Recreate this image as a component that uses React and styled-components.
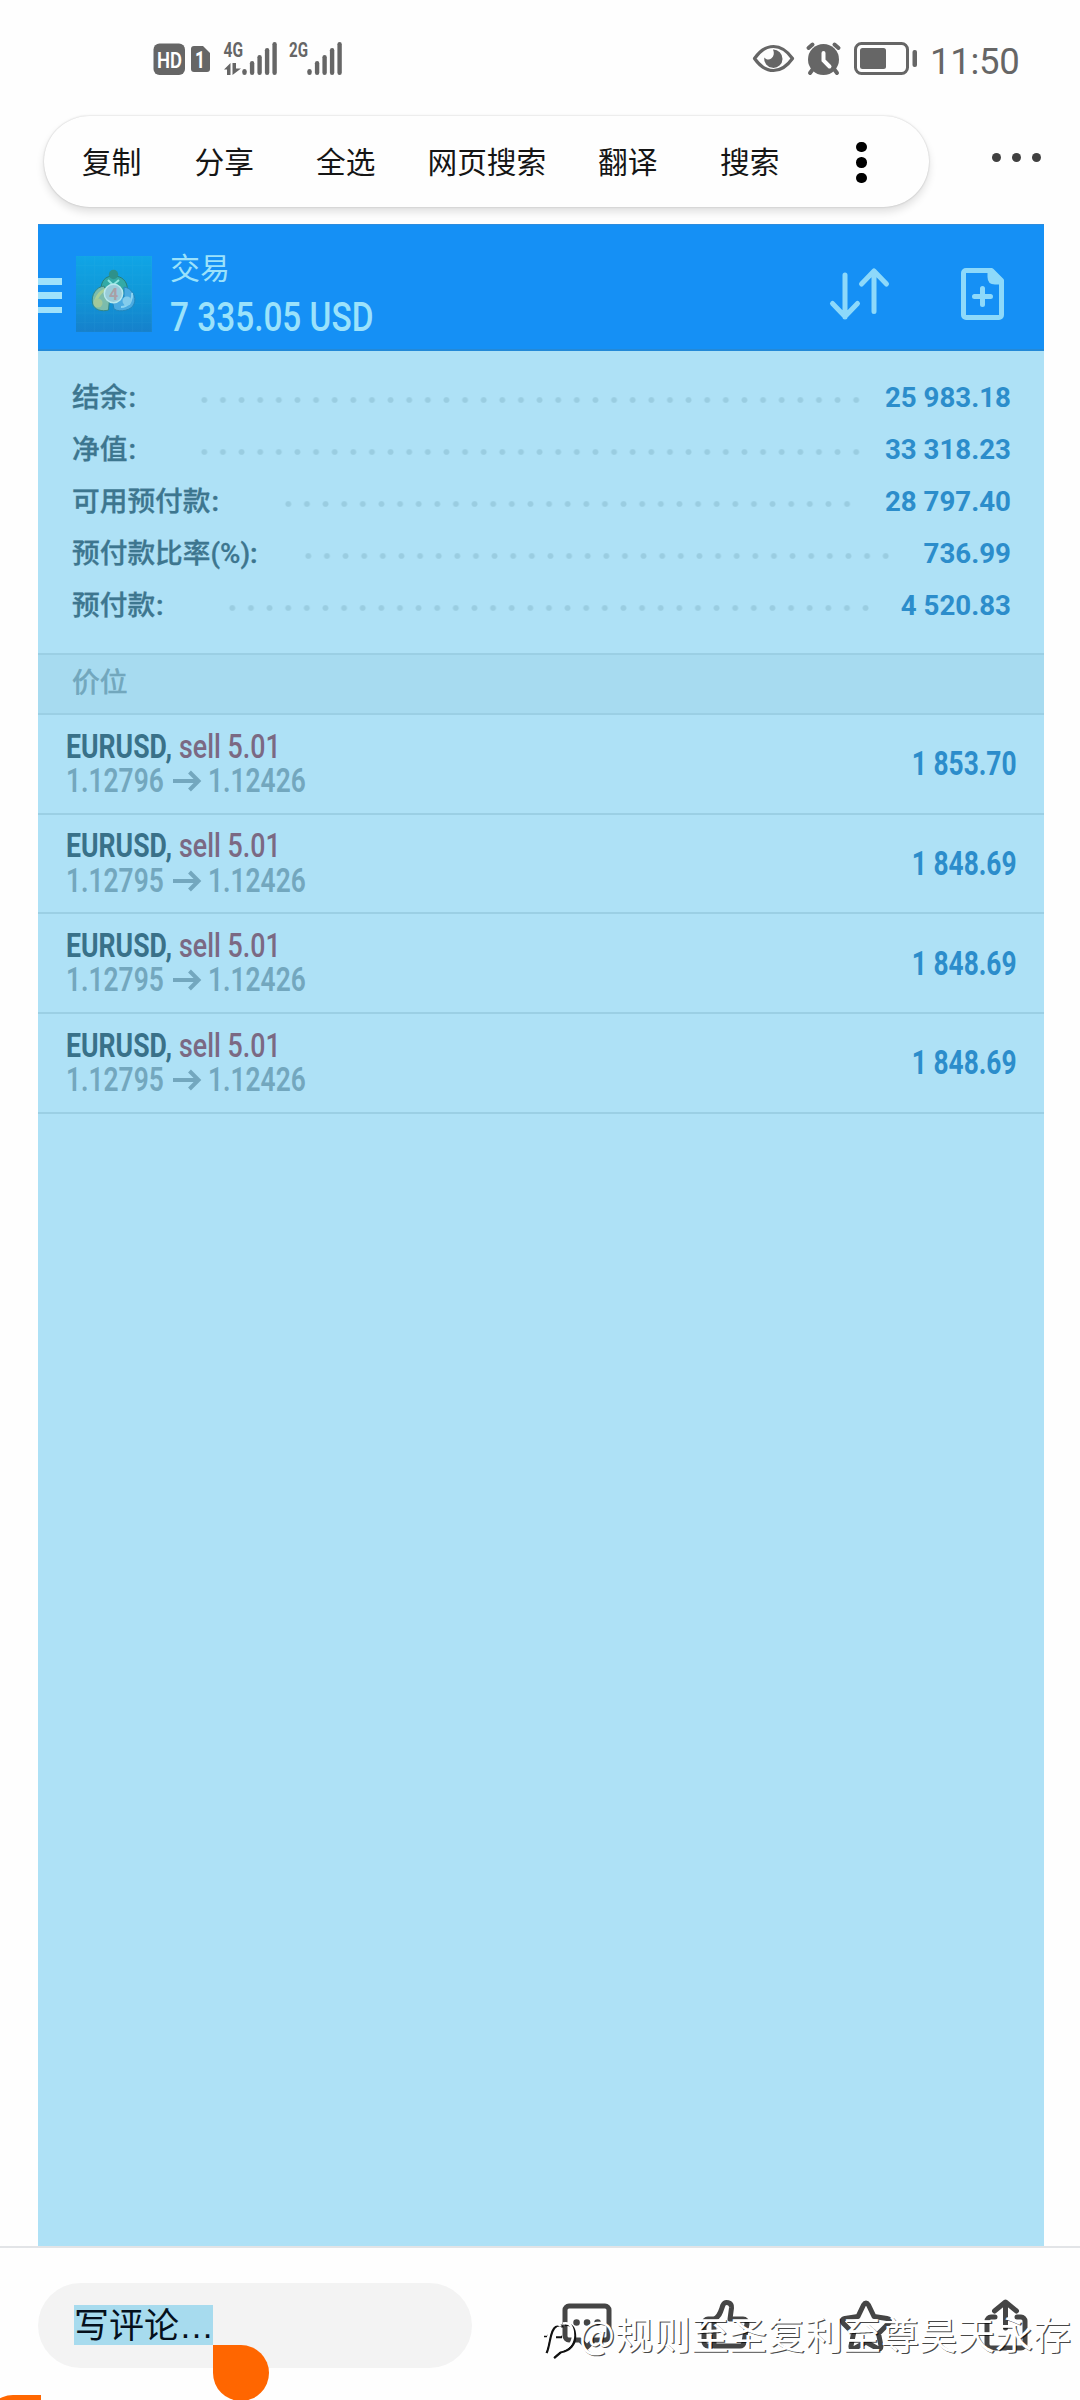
import React from "react";
import styled, { createGlobalStyle } from "styled-components";

const cjk = `Roboto, "Noto Sans CJK SC", sans-serif`;

const Global = createGlobalStyle`
  * { box-sizing: border-box; }
  body { margin: 0; background: #fefefe; }
`;

const Screen = styled.div`
  position: relative;
  width: 1080px;
  height: 2400px;
  overflow: hidden;
  display: flex;
  flex-direction: column;
  background: #fefefe;
  font-family: ${cjk};
`;

const StatusBar = styled.header`
  height: 116px;
  display: flex;
  justify-content: space-between;
  padding: 36px 60px 0 150px;
  color: #666;
`;

const StatusGroup = styled.div`
  display: flex;
  height: 44px;
`;

const Clock = styled.span`
  font-size: 36.5px;
  font-weight: 400;
  line-height: 51px;
  width: 90px;
  margin-left: 9px;
  letter-spacing: -0.3px;
  white-space: nowrap;
`;

const MenuRow = styled.div`
  height: 108px;
  display: flex;
  align-items: flex-start;
  padding-left: 44px;
`;

const SelectionMenu = styled.nav`
  width: 885px;
  height: 91px;
  display: flex;
  align-items: center;
  padding: 2px 0 0 38px;
  border-radius: 46px;
  background: #fefefe;
  box-shadow: 0 0 2px rgba(0, 0, 0, 0.22), 0 5px 8px rgba(0, 0, 0, 0.12);
`;

const MenuItem = styled.span`
  width: ${(p) => p.$w}px;
  flex: none;
  font-size: 29.7px;
  line-height: 44px;
  color: #151515;
  white-space: nowrap;
`;

const DotGroup = styled.span`
  display: flex;
  flex-direction: ${(p) => (p.$vertical ? "column" : "row")};
  gap: ${(p) => p.$gap}px;
  margin: ${(p) => p.$margin};
`;

const Dot = styled.i`
  width: ${(p) => p.$size}px;
  height: ${(p) => p.$size}px;
  border-radius: 50%;
  background: ${(p) => p.$color};
`;

const Article = styled.main`
  flex: 1;
  margin: 0 36px 0 38px;
  background: #aee1f6;
`;

const AppHeader = styled.div`
  height: 127px;
  display: flex;
  align-items: flex-start;
  background: #1590f5;
  border-top: 1px solid #2d8cdd;
  border-bottom: 2px solid #2389d8;
  color: #9be2fb;
`;

const Hamburger = styled.div`
  width: 24px;
  margin: 53px 14px 0 0;
  display: flex;
  flex-direction: column;
  gap: 7.8px;
  i { height: 6.5px; background: #9fe2fb; }
`;

const AppLogo = styled.div`
  width: 76px;
  height: 76px;
  margin: 31px 18px 0 0;
  background: linear-gradient(#10a5e6, #1098d8 50%, #1680cb);
`;

const Heading = styled.div`
  flex: 1;
  margin-top: 23px;
`;

const HeadingTitle = styled.div`
  font-size: 30px;
  line-height: 42px;
`;

const Squeeze = styled.span`
  display: inline-block;
  transform: scaleX(${(p) => p.$x});
  transform-origin: ${(p) => p.$origin || "left"} center;
  white-space: nowrap;
`;

const HeadingAmount = styled.div`
  font-size: 40px;
  font-weight: 480;
  line-height: 48px;
  margin-top: 4px;
`;

const HeaderIcon = styled.svg`
  display: block;
  flex: none;
  width: ${(p) => p.$w}px;
  height: 60px;
  margin: 40px ${(p) => p.$right}px 0 0;
  fill: none;
  stroke: #8dd9fa;
  stroke-width: 5;
  stroke-linecap: round;
  stroke-linejoin: round;
`;

const Summary = styled.section`
  height: 302px;
  padding: 20.5px 33px 0 34px;
`;

const SummaryRow = styled.div`
  height: 52.2px;
  display: flex;
  align-items: center;
`;

const SummaryLabel = styled.span`
  width: ${(p) => p.$w}px;
  flex: none;
  font-size: 27.7px;
  font-weight: 500;
  line-height: 40px;
  color: #3d768f;
  -webkit-text-stroke: 0.3px #3d768f;
  white-space: nowrap;
`;

const Colon = styled.span`
  margin-left: ${(p) => (p.$tight ? 0 : 1)}px;
  font-weight: 600;
`;

const Leader = styled.span`
  width: ${(p) => p.$count * 18.63}px;
  height: 8px;
  margin-top: 4px;
  background: radial-gradient(circle at center, #9acde1 0, #9acde1 2.3px, transparent 3.5px) 0 0 / 18.63px 8px repeat-x;
`;

const SummaryValue = styled.span`
  flex: 1;
  margin-top: -1px;
  text-align: right;
  font-size: 27.7px;
  font-weight: 680;
  color: #2c8dcb;
`;

const SectionTitle = styled.div`
  height: 62px;
  padding-left: 34px;
  border-top: 2px solid #9bcfe4;
  border-bottom: 2px solid #9bcfe4;
  background: #a7dbf0;
  font-size: 27.7px;
  line-height: 55px;
  color: #72a7bd;
  -webkit-text-stroke: 0.7px #72a7bd;
`;

const Position = styled.div`
  height: 99.7px;
  display: flex;
  align-items: center;
  justify-content: space-between;
  padding: 0 27px 0 28px;
  border-bottom: 2px solid #9bcfe4;
  font-size: 32.3px;
`;

const PositionInfo = styled.div`
  margin-top: 0;
`;

const PositionLine = styled.div`
  height: 34.5px;
  display: flex;
  align-items: center;
  line-height: 34px;
  color: #73a7be;
  font-weight: ${(p) => p.$weight || 400};
`;

const Cell = styled.span`
  width: ${(p) => p.$w}px;
  flex: none;
  color: ${(p) => p.$color};
  font-weight: ${(p) => p.$weight};
`;

const Profit = styled.span`
  margin-top: 1px;
  color: #2c8dcb;
  font-weight: 700;
`;

const ArrowIcon = styled.svg`
  display: block;
  width: 37px;
  height: 24px;
  fill: none;
  stroke: currentColor;
  stroke-width: 4;
`;

const BottomBar = styled.footer`
  height: 154.5px;
  display: flex;
  align-items: flex-start;
  padding: 35px 0 0 38px;
  border-top: 2px solid #e2e4e7;
  background: #fefefe;
`;

const CommentBox = styled.div`
  width: 434px;
  height: 85px;
  flex: none;
  padding: 22px 0 0 36px;
  border-radius: 43px;
  background: #f3f3f3;
`;

const SelectedText = styled.span`
  display: block;
  width: 139px;
  height: 40px;
  background: #a7dbee;
  color: #05101c;
  font: 35px/36px "Noto Sans CJK SC", sans-serif;
  white-space: nowrap;
`;

const Ellipsis = styled.span`
  font-family: "Liberation Sans", sans-serif;
`;

const Actions = styled.div`
  display: flex;
  margin: 12px 0 0 82px;
  gap: 79px;
`;

const ActionIcon = styled.svg`
  width: 60px;
  height: 60px;
  fill: none;
  stroke: #454545;
  stroke-width: 5;
  stroke-linecap: round;
  stroke-linejoin: round;
`;

const Handle = styled.i`
  position: absolute;
  left: ${(p) => p.$left}px;
  top: ${(p) => p.$top}px;
  width: 56px;
  height: 56px;
  border-radius: ${(p) => (p.$flip ? "28px 0 28px 28px" : "0 28px 28px 28px")};
  background: #ff6600;
`;

const Watermark = styled.div`
  position: absolute;
  left: 542px;
  top: 2306px;
  display: flex;
  align-items: center;
  color: #fff;
  font: 400 38px/54px "Noto Sans CJK SC", sans-serif;
  white-space: nowrap;
  text-shadow: 1.2px 1.2px 0 rgba(0, 0, 0, 0.72);
`;

const WatermarkLogo = styled.svg`
  width: 37px;
  height: 54px;
  fill: none;
`;

const accounts = [
  { label: "结余", value: "25 983.18", w: 123.2, count: 36 },
  { label: "净值", value: "33 318.23", w: 123.2, count: 36 },
  { label: "可用预付款", value: "28 797.40", w: 207, count: 31 },
  { label: "预付款比率(%)", value: "736.99", w: 226.5, count: 32, tight: true },
  { label: "预付款", value: "4 520.83", w: 151, count: 35 },
];

const positions = [
  { open: "1.12796", profit: "1 853.70" },
  { open: "1.12795", profit: "1 848.69" },
  { open: "1.12795", profit: "1 848.69" },
  { open: "1.12795", profit: "1 848.69" },
];

const menu = [
  ["复制", 112.5],
  ["分享", 121.5],
  ["全选", 111.5],
  ["网页搜索", 170.5],
  ["翻译", 122],
  ["搜索", 60],
];

const bars = [[0, 69], [7.6, 61], [15.1, 55], [22.6, 48], [30.1, 42]];

const Signal = ({ x }) =>
  bars.map(([dx, top]) => (
    <rect key={dx} x={x + dx - 2.2} y={top} width="4.4" height={75 - top} rx="2.2" />
  ));

function StatusLeft() {
  return (
    <svg width="196" height="44" viewBox="150 36 196 44" fill="#666" fontFamily="Roboto, sans-serif">
      <rect x="153.5" y="43.5" width="31.5" height="31.5" rx="6" />
      <text x="157" y="67.5" fontSize="21.5" fontWeight="600" fill="#fff" textLength="25" lengthAdjust="spacingAndGlyphs">HD</text>
      <path d="M194 46h9l7 7v16a3 3 0 0 1-3 3h-13a3 3 0 0 1-3-3V49a3 3 0 0 1 3-3Z" />
      <text x="195" y="67.5" fontSize="23" fontWeight="700" fill="#fff" textLength="10" lengthAdjust="spacingAndGlyphs">1</text>
      <text x="223.5" y="57" fontSize="21" fontWeight="700" textLength="19.5" lengthAdjust="spacingAndGlyphs">4G</text>
      <path d="M224 69.5 230.5 63V75H227V69.5ZM232.5 63h3.5v5.5h5L232.5 75Z" />
      <Signal x={244.5} />
      <text x="289" y="57" fontSize="21" fontWeight="700" textLength="19" lengthAdjust="spacingAndGlyphs">2G</text>
      <Signal x={309.5} />
    </svg>
  );
}

function StatusRight() {
  return (
    <svg width="171" height="44" viewBox="750 36 171 44" fill="#666">
      <path d="M754.5 58.5Q763 46.5 773.5 46.5T792.5 58.5Q784 70.5 773.5 70.5T754.5 58.5Z" fill="none" stroke="#666" strokeWidth="3.2" strokeLinejoin="round" />
      <path d="M773 49.5a9.2 9.2 0 1 1-8.8 8c1.800 2.200 5 2.800 7.300.8 2.500-2.200 3-5.500 1.500-8.800Z" />
      <circle cx="823.5" cy="59.5" r="15.5" />
      <path d="M808.5 48l4-3.500M838.5 48l-4-3.500M813 69l-3 4M834 69l3 4" stroke="#666" strokeWidth="4" strokeLinecap="round" />
      <path d="M823.5 53v7.500l6 6" fill="none" stroke="#fff" strokeWidth="4" strokeLinecap="round" />
      <rect x="855.5" y="43.5" width="52" height="30" rx="6" fill="none" stroke="#666" strokeWidth="3" />
      <rect x="860" y="48" width="26" height="21" rx="2.5" />
      <rect x="912.5" y="50" width="4.5" height="17" rx="2" />
    </svg>
  );
}

function Logo() {
  return (
    <svg width="76" height="76" viewBox="76 256 76 76">
      <defs>
        <pattern id="grid" width="9.5" height="9.5" patternUnits="userSpaceOnUse">
          <path d="M9.5 0V9.5H0" fill="none" stroke="#47b9dd" strokeOpacity=".14" strokeWidth="1" />
        </pattern>
      </defs>
      <rect x="76" y="256" width="76" height="76" fill="url(#grid)" />
      <path d="M101 290c0-9 4-14 12.500-14s14 5 14 14l-6 5-9-7Z" fill="#33aaa6" stroke="#287e78" />
      <circle cx="113.5" cy="274.5" r="4.7" fill="#2e918a" />
      <path d="M104 286c-8 1-13 9-11.500 17 1 7 10 9 16 7l1-10Z" fill="#7cbcac" stroke="#328785" />
      <path d="M95 302c3-8 6-10 11-13" fill="none" stroke="#a8cf98" strokeWidth="3" />
      <circle cx="98" cy="303" r="4.5" fill="#a2c89a" />
      <path d="M124 287c8 1 13 10 10 17-2 6-14 9-20 5l-2-10 12-2Z" fill="#4babe1" stroke="#2387bc" />
      <path d="M121 307c7 0 12-7 11-14" fill="none" stroke="#8bd3f1" strokeWidth="2" />
      <circle cx="127" cy="301" r="4.5" fill="#83ccec" />
      <path d="m108 280 5 5 6-5" fill="none" stroke="#8be4df" strokeWidth="2" />
      <circle cx="113.5" cy="293.5" r="9.2" fill="#98cbd9" stroke="#b9e9ee" strokeWidth="1.5" />
      <text x="113.5" y="299.5" textAnchor="middle" fontFamily="Roboto, sans-serif" fontWeight="700" fontSize="16" fill="#a99fa6">4</text>
    </svg>
  );
}

export default function App() {
  return (
    <Screen>
      <Global />
      <StatusBar>
        <StatusGroup><StatusLeft /></StatusGroup>
        <StatusGroup><StatusRight /><Clock>11:50</Clock></StatusGroup>
      </StatusBar>

      <MenuRow>
        <SelectionMenu>
          {menu.map(([label, w]) => <MenuItem key={label} $w={w}>{label}</MenuItem>)}
          <DotGroup $vertical $gap={4.8} $margin="0 0 0 76px">
            {[0, 1, 2].map((i) => <Dot key={i} $size={10.5} $color="#000" />)}
          </DotGroup>
        </SelectionMenu>
        <DotGroup $gap={11.3} $margin="36.5px 0 0 62.5px">
          {[0, 1, 2].map((i) => <Dot key={i} $size={9} $color="#404040" />)}
        </DotGroup>
      </MenuRow>

      <Article>
        <AppHeader>
          <Hamburger><i /><i /><i /></Hamburger>
          <AppLogo><Logo /></AppLogo>
          <Heading>
            <HeadingTitle>交易</HeadingTitle>
            <HeadingAmount><Squeeze $x={0.834}>7 335.05 USD</Squeeze></HeadingAmount>
          </Heading>
          <HeaderIcon $w={70} $right={55} viewBox="825 265 70 60">
            <path d="M845 275v42M832.5 303.5 845 316.5l12.500-13M874 311.5V271M861.5 284 874 271l12.500 13" />
          </HeaderIcon>
          <HeaderIcon $w={70} $right={24} viewBox="950 265 70 60">
            <path d="M966 270.5h25.500l10 10V315a2.500 2.500 0 0 1-2.500 2.500h-33a2.500 2.500 0 0 1-2.500-2.500V273a2.500 2.500 0 0 1 2.500-2.500ZM982.5 288.5v16M974.5 296.5h16" />
            <path d="M990 271v6q0 5 5 5h6Z" fill="#8dd9fa" />
          </HeaderIcon>
        </AppHeader>

        <Summary>
          {accounts.map((a) => (
            <SummaryRow key={a.label}>
              <SummaryLabel $w={a.w}>{a.label}<Colon $tight={a.tight}>:</Colon></SummaryLabel>
              <Leader $count={a.count} />
              <SummaryValue>{a.value}</SummaryValue>
            </SummaryRow>
          ))}
        </Summary>
        <SectionTitle>价位</SectionTitle>
        {positions.map((p, i) => (
          <Position key={i}>
            <PositionInfo>
              <PositionLine>
                <Cell $w={113} $color="#397189" $weight={680}><Squeeze $x={0.825}>EURUSD,</Squeeze></Cell>
                <Cell $w={100} $color="#7b6983" $weight={480}><Squeeze $x={0.83}>sell 5.01</Squeeze></Cell>
              </PositionLine>
              <PositionLine $weight={600}>
                <Cell $w={104.5}><Squeeze $x={0.815}>{p.open}</Squeeze></Cell>
                <ArrowIcon viewBox="0 0 37 24"><path d="M2 12H27M18.5 3l9 9-9 9" /></ArrowIcon>
                <Cell $w={100}><Squeeze $x={0.815}>1.12426</Squeeze></Cell>
              </PositionLine>
            </PositionInfo>
            <Profit><Squeeze $x={0.815} $origin="right">{p.profit}</Squeeze></Profit>
          </Position>
        ))}
      </Article>

      <BottomBar>
        <CommentBox>
          <SelectedText>写评论<Ellipsis>…</Ellipsis></SelectedText>
        </CommentBox>
        <Actions>
          <ActionIcon viewBox="554 2295 60 60">
            <path d="M569 2306h36a4 4 0 0 1 4 4v26a4 4 0 0 1-4 4h-11l-7 7-7-7h-11a4 4 0 0 1-4-4v-26a4 4 0 0 1 4-4Z" />
            <path d="M576.5 2322.5h.1M587 2322.5h.1M597.5 2322.5h.1" strokeWidth="6.5" />
          </ActionIcon>
          <ActionIcon viewBox="693 2295 60 60">
            <path d="M714 2319c6-2 7-9 9-14 2-4 9-3 8.500 3l-1.500 11h13a4 4 0 0 1 4 4.500l-3 19a4 4 0 0 1-4 3.500h-26ZM714 2319v27M713 2319h-5a4 4 0 0 0-4 4v19a4 4 0 0 0 4 4h2" />
          </ActionIcon>
          <ActionIcon viewBox="832 2295 60 60">
            <path d="m868.5 2305 5.500 11.500 13 2q5 1 1.500 5l-10 10 2.500 12.500q0 4-3.500 2.500L866 2342l-11.500 6.500q-4 1.500-3.500-2.500l2.500-12.500-10-10q-3-4 1.500-5l13-2 5.500-11.500q2.500-4 5 0Z" />
          </ActionIcon>
          <ActionIcon viewBox="971 2295 60 60">
            <path d="M1005.5 2328v-25M994.5 2311l11-9 11 9M995 2317h-4a4 4 0 0 0-4 4v23a4 4 0 0 0 4 4h30a4 4 0 0 0 4-4v-23a4 4 0 0 0-4-4h-4" />
          </ActionIcon>
        </Actions>
      </BottomBar>

      <Handle $left={213} $top={2345} />
      <Handle $left={-15} $top={2395} $flip />
      <Watermark>
        <WatermarkLogo viewBox="542 2306 37 54">
          <path d="M546.5 2353c4-9 3-24 10-27 3-1.500 6-.5 6 1.500M544 2336h5M556 2337h6M565 2325c8-2 10 5 10 12s-5 14-14 15l-7 6" stroke="#111" strokeWidth="2.5" />
          <path d="M544.5 2352c4-9 3-24 10-27 3-1.500 6-.5 6 1.500M542 2334.5h5M555 2335h6M563 2323.500c8-2 10 5 10 12s-5 14-14 15l-7 6" stroke="#fff" strokeWidth="2.5" />
        </WatermarkLogo>
        @规则至圣复利至尊昊天永存
      </Watermark>
    </Screen>
  );
}
